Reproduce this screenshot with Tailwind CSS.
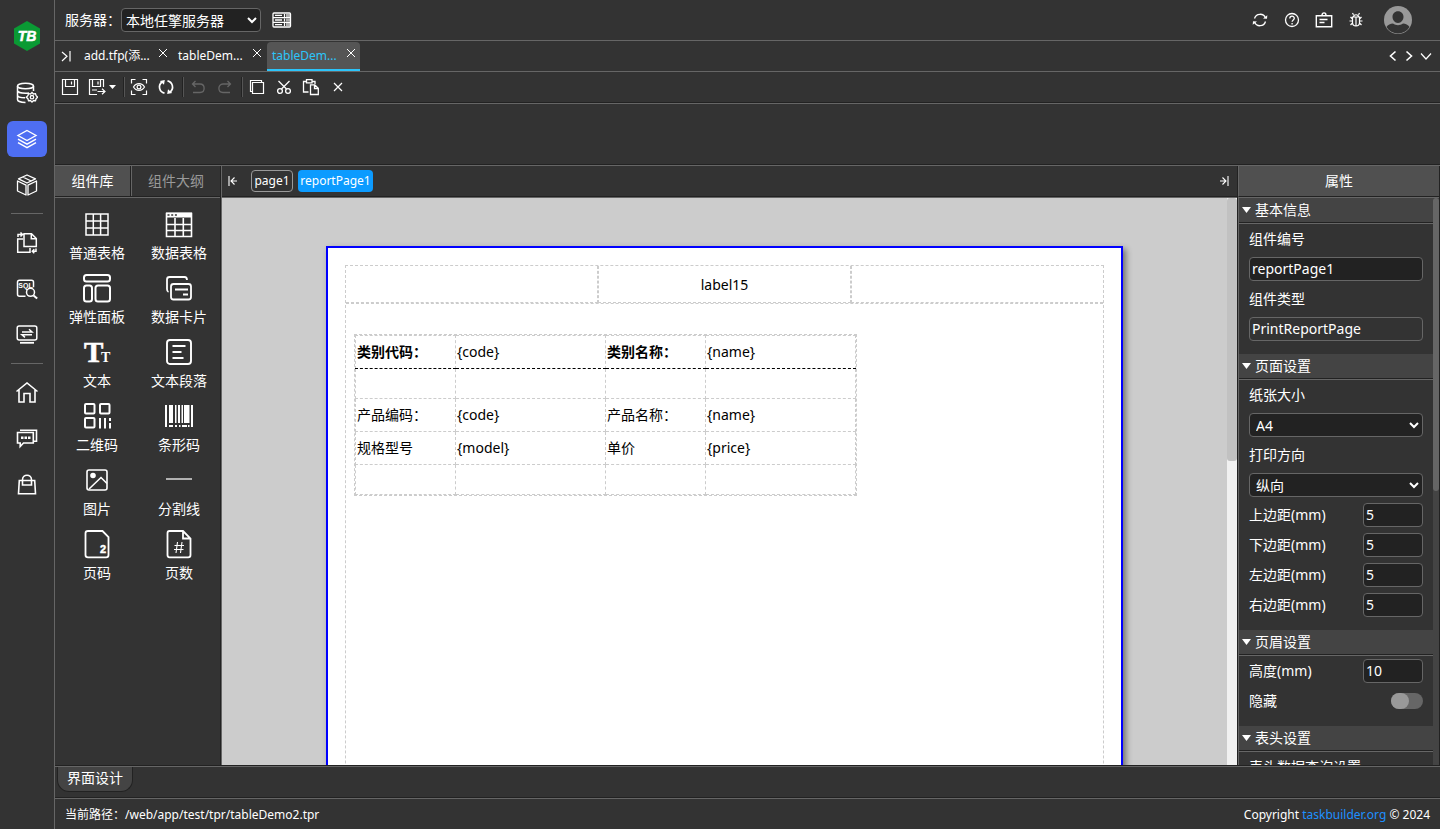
<!DOCTYPE html>
<html lang="zh-CN">
<head>
<meta charset="utf-8">
<title>TaskBuilder</title>
<script src="https://cdn.jsdelivr.net/npm/@tailwindcss/browser@4"></script>
</head>
<body class="flex h-dvh overflow-hidden bg-[#333] font-['Noto_Sans','Noto_Sans_CJK_SC',sans-serif] text-sm leading-5 text-white">

<!-- Main navigation -->
<nav class="flex w-[55px] shrink-0 flex-col items-center gap-[10px] border-r border-[#666] pt-5" aria-label="主导航">
  <a href="#" class="mb-[13px]" aria-label="TaskBuilder">
    <svg class="h-8 w-[28px]" viewBox="0 0 28 32"><path d="M14 1 27 8.500V23.500L14 31 1 23.500V8.500Z" fill="#0a9a34"/><text x="14" y="21" text-anchor="middle" font-family="Liberation Sans" font-size="14" font-weight="bold" font-style="italic" fill="#fff" stroke="#fff" stroke-width=".5">TB</text></svg>
  </a>
  <button class="flex h-9 w-10 items-center justify-center rounded-md" aria-label="数据源">
    <svg class="size-[22px]" viewBox="0 0 22 22" fill="none" stroke="#fff" stroke-width="1.500"><ellipse cx="9.500" cy="4" rx="8" ry="2.800"/><path d="M1.500 4v13.500c0 1.500 3 3 8 3M17.500 4v5M1.500 8.500c0 1.500 3.500 2.800 8 2.800 1.500 0 2.500-.1 3.500-.3M1.500 13c0 1.500 3 2.800 7.500 2.800"/><path d="m16 10.500 1.500 1.500 2-.3.600 2 1.600 1.500-1.600 1.500-.6 2-2-.2-1.500 1.600-1.500-1.600-2 .2-.6-2-1.600-1.500 1.600-1.500.6-2 2 .3z" stroke-width="1.300"/><circle cx="16" cy="15.200" r="1.700" stroke-width="1.300"/></svg>
  </button>
  <button class="flex h-9 w-10 items-center justify-center rounded-md bg-[#4e6ef2]" aria-label="应用">
    <svg class="size-[22px]" viewBox="0 0 22 22" fill="none" stroke="#fff" stroke-width="1.400"><path d="m11 2.500 9 5-9 5-9-5zM2 11.200l9 5 9-5M2 14.600l9 5 9-5"/></svg>
  </button>
  <button class="flex h-9 w-10 items-center justify-center rounded-md" aria-label="组件">
    <svg class="size-[22px]" viewBox="0 0 22 22" fill="none" stroke="#fff" stroke-width="1.300" stroke-linejoin="round"><path d="M11 1 19.500 4.800 11 9 2.500 4.800zM1.500 7l8.500 4.200v9.800L1.500 17zM20.500 7 12 11.200v9.800l8.500-4zM6.700 3l8.500 4"/></svg>
  </button>
  <hr class="w-8 border-[#666]">
  <button class="mt-px flex h-9 w-10 items-center justify-center rounded-md" aria-label="迁移">
    <svg class="size-[22px]" viewBox="0 0 22 22" fill="none" stroke="#fff" stroke-width="1.500"><path d="M8 14.500V1.700h7.500L20.300 6.500v8zM15.300 2v4.700H20M7 7H1.700v13.300H14V16M2 5V2.500h3.500M4.500.5l2 2-2 2M20 16.500v2.700h-3M18.300 17.200l-2 2 2 2"/></svg>
  </button>
  <button class="flex h-9 w-10 items-center justify-center rounded-md" aria-label="SQL查询">
    <svg class="size-[22px]" viewBox="0 0 22 22" fill="none" stroke="#fff" stroke-width="1.500"><path d="M9.500 18.300H3.500c-1.200 0-2-.8-2-2V4.200c0-1.200.8-2 2-2h12c1.200 0 2 .8 2 2v5"/><circle cx="14.500" cy="14.300" r="4"/><path d="m17.500 17.500 3.700 3" stroke-width="2"/><text x="9.500" y="9.500" text-anchor="middle" font-family="Liberation Sans" font-size="7" font-weight="bold" fill="#fff" stroke="none">SQL</text></svg>
  </button>
  <button class="flex h-9 w-10 items-center justify-center rounded-md" aria-label="终端">
    <svg class="size-[22px]" viewBox="0 0 22 22" fill="none" stroke="#fff" stroke-width="1.500"><rect x="1.200" y="2" width="19.600" height="14" rx="2"/><path d="M4 18.800h14" stroke-width="1.800"/><path d="M6 8h10L13 5.300M16 10.800H6l3 2.500"/></svg>
  </button>
  <hr class="w-8 border-[#666]">
  <button class="mt-px flex h-9 w-10 items-center justify-center rounded-md" aria-label="首页">
    <svg class="size-[22px]" viewBox="0 0 22 22" fill="none" stroke="#fff" stroke-width="1.600"><path d="M.5 9.500 11 1l10.500 8.500M3 8v12h5v-8.500h6V20h5V8"/></svg>
  </button>
  <button class="flex h-9 w-10 items-center justify-center rounded-md" aria-label="消息">
    <svg class="size-[22px]" viewBox="0 0 22 22" fill="none" stroke="#fff" stroke-width="1.600"><path d="M1.500 4.500h15.800V15H7.500l-3.300 3.500V15H1.500zM4 2.200h16.500v11H18"/><path d="M5 9.700h9.500" stroke-width="2.500" stroke-dasharray="2.500 1"/></svg>
  </button>
  <button class="flex h-9 w-10 items-center justify-center rounded-md" aria-label="商店">
    <svg class="size-[22px]" viewBox="0 0 22 22" fill="none" stroke="#fff" stroke-width="1.600"><path d="M3.300 6.500h15.400l.8 13.300H2.500zM6.500 11V5.700c0-6 9-6 9 0V11z"/></svg>
  </button>
</nav>

<div class="flex min-w-0 flex-1 flex-col">

  <!-- Server bar -->
  <header class="flex h-[41px] shrink-0 items-center border-b border-[#666] pl-[10px] pr-7">
    <label for="server">服务器：</label>
    <select id="server" class="h-6 w-[140px] rounded border border-[#666] bg-[#222]"><option>本地任擎服务器</option></select>
    <button class="ml-[11px]" aria-label="服务器列表"><svg class="size-5" viewBox="0 0 20 20" fill="none" stroke="#fff" stroke-width="1.300"><rect x="1" y="3" width="17.500" height="14" rx="1"/><path d="M1 7.700h17.500M1 12.300h17.500M3 5.400h7M3 10h7M3 14.700h7"/><path d="M12.500 4v12M15 4v12M17 4v12" stroke-width="1.200" stroke-dasharray="3 1.500"/></svg></button>
    <div class="ml-auto flex items-center gap-4">
      <button aria-label="刷新"><svg class="size-4" viewBox="0 0 16 16" fill="none" stroke="#fff" stroke-width="1.300"><path d="M2.500 6.500a5.800 5.800 0 0 1 11-.5M13.500 9.500a5.800 5.800 0 0 1-11 .5"/><path d="m11 6.500 4 .3.300-3.500zM5 9.500l-4-.3-.3 3.500z" fill="#fff" stroke="none"/></svg></button>
      <button aria-label="帮助"><svg class="size-4" viewBox="0 0 16 16" fill="none" stroke="#fff" stroke-width="1.300"><circle cx="8" cy="8" r="6.500"/><path d="M5.800 6.500c0-3 4.500-3 4.500-.3 0 1.700-2.200 1.700-2.200 3.600M8.100 11v1.400"/></svg></button>
      <button aria-label="公告"><svg class="-mx-px size-[18px]" viewBox="0 0 18 18" fill="none" stroke="#fff" stroke-width="1.400"><path d="M1.300 4.700h15.400v11H1.300zM7 4.500C7 1 11 1 11 4.500M4.500 8.500h8M4.500 11.500h5"/></svg></button>
      <button aria-label="调试"><svg class="size-4" viewBox="0 0 16 16" fill="none" stroke="#fff" stroke-width="1.200"><path d="M4.500 5h7v5.500a3.500 3.500 0 0 1-7 0zM5.500 5c0-3 5-3 5 0M5.500 2.700 4.500 1M10.500 2.700l1-1.700M8 5v9M4.500 7 2.500 5M11.500 7l2-2M1.500 9h3M11.500 9h3M4.500 11l-2 2M11.500 11l2 2"/></svg></button>
      <button class="ml-1" aria-label="用户"><svg class="size-7" viewBox="0 0 28 28"><circle cx="14" cy="14" r="14" fill="#999"/><path d="M2.500 21c1.300-2.200 4-3.300 6.500-3.500 3 2.300 7 2.300 10 0 2.500.2 5.200 1.300 6.500 3.500a13.300 13.300 0 0 1-23 0zM14 5.300c3.300 0 5.500 2.500 5.500 5.500S17.300 17 14 17s-5.500-3.200-5.500-6.200S10.700 5.300 14 5.300z" fill="#333"/></svg></button>
    </div>
  </header>

  <!-- Open files -->
  <div class="flex h-[31px] shrink-0 items-center border-b border-[#666] pr-[7px] text-xs">
    <button class="mr-1 w-5 pl-[5px]" aria-label="收起"><svg class="size-3" viewBox="0 0 12 12" fill="none" stroke="#fff" stroke-width="1.200"><path d="m2 2 5 4.300L2 11M10 1v10.500"/></svg></button>
    <div class="flex h-full items-end gap-px">
      <div class="flex h-[29px] w-[93px] items-start justify-between pl-[5px] pr-1"><button class="whitespace-nowrap pt-1.5">add.tfp(添...</button><button class="pt-1.5" aria-label="关闭"><svg class="size-[10px]" viewBox="0 0 10 10" stroke="#fff"><path d="m1 1 8 8M9 1 1 9"/></svg></button></div>
      <div class="flex h-[29px] w-[93px] items-start justify-between pl-[5px] pr-1"><button class="whitespace-nowrap pt-1.5">tableDem...</button><button class="pt-1.5" aria-label="关闭"><svg class="size-[10px]" viewBox="0 0 10 10" stroke="#fff"><path d="m1 1 8 8M9 1 1 9"/></svg></button></div>
      <div class="flex h-[29px] w-[93px] items-start justify-between rounded-t-sm border-b-2 border-[#2cc5fb] bg-[#555] pl-[5px] pr-1"><button class="whitespace-nowrap pt-1.5 text-[#2cc5fb]">tableDem...</button><button class="pt-1.5" aria-label="关闭"><svg class="size-[10px]" viewBox="0 0 10 10" stroke="#fff"><path d="m1 1 8 8M9 1 1 9"/></svg></button></div>
    </div>
    <div class="ml-auto flex items-center gap-1">
      <button aria-label="向左"><svg class="size-3" viewBox="0 0 12 12" fill="none" stroke="#fff" stroke-width="1.600"><path d="M8.500 1.500 3.500 6l5 4.500"/></svg></button>
      <button aria-label="向右"><svg class="size-3" viewBox="0 0 12 12" fill="none" stroke="#fff" stroke-width="1.600"><path d="m3.500 1.500 5 4.500-5 4.500"/></svg></button>
      <button aria-label="全部文件"><svg class="size-3.5" viewBox="0 0 14 14" fill="none" stroke="#fff" stroke-width="1.200"><path d="m2 4.500 5 5.500 5-5.500"/></svg></button>
    </div>
  </div>

  <!-- Toolbar -->
  <div class="flex h-[31px] shrink-0 items-center border-b border-[#222] pl-px" role="toolbar">
    <button class="flex w-[27px] justify-center" aria-label="保存"><svg class="size-[18px]" viewBox="0 0 18 18" fill="none" stroke="#fff" stroke-width="1.200"><path d="M1.500 1.500h15v15h-15zM4.500 1.500v7h9v-7M10.500 3.500v3"/></svg></button>
    <button class="flex w-[37px] items-center gap-[3px] pl-[5px]" aria-label="另存为"><svg class="size-[18px]" viewBox="0 0 18 18" fill="none" stroke="#fff" stroke-width="1.200"><path d="M9 16.500H1.500v-15h14V9M4.500 1.500v7h8v-7M10 3.500v3M4 12h5M9.500 13.500H17M14 10.700l3 2.800-3 2.800"/></svg><svg class="h-1 w-[7px]" viewBox="0 0 7 4"><path d="M0 0h7L3.500 4z" fill="#fff"/></svg></button>
    <span class="ml-[3px] h-5 w-[2px] border-l border-[#222] bg-[#555]"></span>
    <button class="flex w-[27px] justify-center" aria-label="预览"><svg class="size-[18px]" viewBox="0 0 18 18" fill="none" stroke="#fff" stroke-width="1.200"><path d="M1.500 5.500v-4h4M12.500 1.500h4v4M16.500 12.500v4h-4M5.500 16.500h-4v-4M3.500 9c2.500-4.500 8.500-4.500 11 0-2.500 4.500-8.500 4.500-11 0z"/><circle cx="9" cy="9" r="1.900"/></svg></button>
    <button class="flex w-[27px] justify-center" aria-label="刷新"><svg class="size-[18px]" viewBox="0 0 18 18" fill="none" stroke="#fff" stroke-width="1.700"><path d="M7.500 15.200A6.300 6.300 0 0 1 5 4M10.500 2.800A6.300 6.300 0 0 1 13 14"/><path d="m2.800 3 5-1-.8 4.800zM15.200 15l-5 1 .8-4.800z" fill="#fff" stroke="none"/></svg></button>
    <span class="ml-[3px] h-5 w-[2px] border-l border-[#222] bg-[#555]"></span>
    <button class="flex w-[27px] justify-center" aria-label="撤销"><svg class="size-4" viewBox="0 0 16 16" fill="none" stroke="#666" stroke-width="1.300"><path d="M5.500 2 2.500 5l3 3M2.500 5h7.500c5.500 0 5.500 8.500 0 8.500H3"/></svg></button>
    <button class="flex w-[27px] justify-center" aria-label="重做"><svg class="size-4" viewBox="0 0 16 16" fill="none" stroke="#666" stroke-width="1.300"><path d="m10.500 2 3 3-3 3M13.500 5H6c-5.500 0-5.500 8.500 0 8.500h7"/></svg></button>
    <span class="ml-[3px] h-5 w-[2px] border-l border-[#222] bg-[#555]"></span>
    <button class="flex w-[27px] justify-center" aria-label="复制"><svg class="size-4" viewBox="0 0 16 16" fill="none" stroke="#fff" stroke-width="1.200"><path d="M3.500 3.500h11v11h-11z"/><path d="M3.500 12.500h-2v-11h11v2"/></svg></button>
    <button class="flex w-[27px] justify-center" aria-label="剪切"><svg class="size-4" viewBox="0 0 16 16" fill="none" stroke="#fff" stroke-width="1.300"><circle cx="4" cy="12" r="2.400"/><circle cx="12" cy="12" r="2.400"/><path d="M2.500 2 10.500 10M13.500 2l-8 8"/></svg></button>
    <button class="flex w-[27px] justify-center" aria-label="粘贴"><svg class="size-[18px]" viewBox="0 0 18 18" fill="none" stroke="#fff" stroke-width="1.300"><path d="M6.500 14h-5V3.500h3M10 3.500h3V6M4.500 1.700h5.500v3.200H4.500z"/><path d="M8.500 6.800h4.300l3.500 3.400v6.300H8.500zM12.500 7v3.500h3.500"/></svg></button>
    <button class="flex w-[27px] justify-center" aria-label="删除"><svg class="size-[10px]" viewBox="0 0 10 10" stroke="#fff" stroke-width="1.200"><path d="m1 1 8 8M9 1 1 9"/></svg></button>
  </div>
  <div class="h-[62px] shrink-0 border-b border-t border-b-[#222] border-t-[#666]"></div>

  <!-- Designer -->
  <div class="flex min-h-0 flex-1 border-b border-t border-b-[#222] border-t-[#666]">

    <aside class="flex w-[166px] shrink-0 flex-col border-r border-[#222]">
      <div class="flex h-[31px] shrink-0 border-b border-[#222]">
        <button class="w-[76px] border-r border-[#222] bg-[#505050]">组件库</button>
        <button class="flex-1 border-l border-[#666] text-[#999]">组件大纲</button>
      </div>
      <div class="grid flex-1 auto-rows-[64px] grid-cols-2 content-start border-t border-[#666] pl-px pt-[9px]">
        <button class="flex flex-col items-center"><svg class="h-9 w-8" viewBox="0 0 32 36" fill="none" stroke="#fff" stroke-width="1.500"><path d="M5 7h22v21H5zM5 14h22M5 21h22M12.300 7v21M19.600 7v21"/></svg>普通表格</button>
        <button class="flex flex-col items-center"><svg class="h-9 w-8" viewBox="0 0 32 36" fill="none" stroke="#fff" stroke-width="1.600"><path d="M3.500 6.500h25v23h-25zM3.500 17.500h25M3.500 23.500h25M12 11v18M20.300 11v18"/><path d="M3 5.500h26v5H3z" fill="#fff" stroke="none"/><path d="M4.500 8h10" stroke="#333" stroke-dasharray="2 1.700"/></svg>数据表格</button>
        <button class="flex flex-col items-center"><svg class="h-9 w-8" viewBox="0 0 32 36" fill="none" stroke="#fff" stroke-width="2"><rect x="3" y="4" width="26" height="6.500" rx="2.500"/><rect x="3" y="14.500" width="8" height="16" rx="2.500"/><rect x="14.500" y="14.500" width="14.500" height="16" rx="2.500"/></svg>弹性面板</button>
        <button class="flex flex-col items-center"><svg class="h-9 w-8" viewBox="0 0 32 36" fill="none" stroke="#fff" stroke-width="1.800"><path d="M5.500 21c-1.300-.5-1.500-1.500-1.500-3V8.500C4 7 4.800 6 6.500 6h15c1.500 0 2.500 1 2.500 3"/><rect x="8" y="13" width="20" height="15.500" rx="2.500"/><path d="M12 18.500h13M20 23.500h5"/></svg>数据卡片</button>
        <button class="flex flex-col items-center"><svg class="h-9 w-8" viewBox="0 0 32 36" fill="#fff"><text x="3" y="27" font-family="Liberation Serif" font-size="29" font-weight="bold" stroke="#fff" stroke-width=".6">T</text><text x="20" y="27" font-family="Liberation Serif" font-size="14" font-weight="bold">T</text></svg>文本</button>
        <button class="flex flex-col items-center"><svg class="h-9 w-8" viewBox="0 0 32 36" fill="none" stroke="#fff" stroke-width="1.900"><rect x="4" y="5" width="24" height="24" rx="3"/><path d="M9.500 11h13M9.500 17h9M9.500 23h11"/></svg>文本段落</button>
        <button class="flex flex-col items-center"><svg class="h-9 w-8" viewBox="0 0 32 36" fill="none" stroke="#fff" stroke-width="2"><rect x="4" y="5" width="9.500" height="9.500" rx="1"/><rect x="19" y="5" width="9.500" height="9.500" rx="1"/><rect x="4" y="19" width="9.500" height="9.500" rx="1"/><path d="M19 19v10.500M24 19v10.500M29 19v3M29 24v5.500"/></svg>二维码</button>
        <button class="flex flex-col items-center"><svg class="h-9 w-8" viewBox="0 0 32 36" fill="#fff"><path d="M2 6h2v22H2zM6 6h4v18H6zM12 6h1.500v18H12zM15 6h2v18h-2zM18.500 6h1.500v18h-1.500zM21 6h5.500v18H21zM28 6h2v22h-2zM6 26h4v2H6zM12 26h2v2h-2zM16 26h1.500v2H16zM19 26h5v2h-5zM25 26h1.500v2H25z"/></svg>条形码</button>
        <button class="flex flex-col items-center"><svg class="h-9 w-8" viewBox="0 0 32 36" fill="none" stroke="#fff" stroke-width="1.600"><rect x="6" y="7" width="20" height="20" rx="2"/><circle cx="12" cy="12.500" r="2" fill="#fff"/><path d="m8 26 12-11.500 6 6"/></svg>图片</button>
        <button class="flex flex-col items-center"><svg class="h-9 w-8" viewBox="0 0 32 36" stroke="#ddd" stroke-width="1.500"><path d="M3 16h26"/></svg>分割线</button>
        <button class="flex flex-col items-center"><svg class="h-9 w-8" viewBox="0 0 32 36" fill="none" stroke="#fff" stroke-width="1.800"><path d="M7 4h14.500l6 6V28c0 1.500-.8 2.300-2.300 2.300H7c-1.500 0-2.500-.8-2.500-2.300V6.300C4.500 4.800 5.500 4 7 4z"/><text x="19" y="26" font-family="Liberation Sans" font-size="11" font-weight="bold" fill="#fff" stroke="#fff" stroke-width=".5">2</text></svg>页码</button>
        <button class="flex flex-col items-center"><svg class="h-9 w-8" viewBox="0 0 32 36" fill="none" stroke="#fff" stroke-width="1.800"><path d="M6.500 4H20l7.500 7.500V28c0 1.500-.8 2.300-2.300 2.300H6.500C5 30.300 4.500 29.500 4.500 28V6.300C4.500 4.800 5 4 6.500 4zM20 4v7.500h7.500"/><path d="M14.500 15l-1.500 11M19 15l-1.500 11M11.500 18.500h9.500M11 22.500h9.500" stroke-width="1.100"/></svg>页数</button>
      </div>
    </aside>

    <main class="flex min-w-0 flex-1 flex-col border-l border-[#666]">
      <div class="flex h-[31px] shrink-0 items-center border-b border-[#222] pl-[5px] pr-[7px] text-xs">
        <button aria-label="收起左侧"><svg class="size-3" viewBox="0 0 12 12" fill="none" stroke="#fff" stroke-width="1.100"><path d="M2 1v10M10 6H4M7.500 2.500 4 6l3.500 3.500"/></svg></button>
        <button class="ml-3 h-[22px] w-[42px] rounded border border-[#999]">page1</button>
        <button class="ml-[5px] h-[22px] w-[75px] rounded bg-[#0c9bff]">reportPage1</button>
        <button class="ml-auto" aria-label="收起右侧"><svg class="size-3" viewBox="0 0 12 12" fill="none" stroke="#fff" stroke-width="1.100"><path d="M10 1v10M2 6h6M4.500 2.500 8 6l-3.500 3.500"/></svg></button>
      </div>
      <div class="flex min-h-0 flex-1 border-t border-[#666] bg-[#ccc] text-black">
        <div class="min-w-0 flex-1 overflow-hidden pt-12">
          <section class="mx-auto h-[1127px] w-[797px] border-2 border-[#00f] bg-white p-[17px] shadow-[3px_3px_6px_rgba(0,0,0,0.45)]">
            <div class="h-full border border-dashed border-[#ccc]">
              <div class="grid h-[38px] grid-cols-3 border-b border-dashed border-[#ccc]">
                <div class="border-b border-r border-dashed border-[#ccc]"></div>
                <div class="flex items-center justify-center border-x border-b border-dashed border-[#ccc] pt-px">label15</div>
                <div class="border-b border-l border-dashed border-[#ccc]"></div>
              </div>
              <div class="ml-2 mt-[30px] w-[503px] border border-dashed border-[#ccc]">
                <table class="w-full table-fixed border-collapse [&_td]:border [&_td]:border-dashed [&_td]:border-[#ccc] [&_td]:px-px [&_td]:py-0 [&_th]:border [&_th]:border-dashed [&_th]:border-[#ccc] [&_th]:border-b-black [&_th]:px-px [&_th]:py-0 [&_th]:text-left">
                  <colgroup><col class="w-[100px]"><col class="w-[150px]"><col class="w-[100px]"><col class="w-[150px]"></colgroup>
                  <thead><tr class="h-[33px]"><th>类别代码：</th><th class="font-normal">{code}</th><th>类别名称：</th><th class="font-normal">{name}</th></tr></thead>
                  <tbody>
                    <tr class="h-[30px]"><td></td><td></td><td></td><td></td></tr>
                    <tr class="h-[33px]"><td>产品编码：</td><td>{code}</td><td>产品名称：</td><td>{name}</td></tr>
                    <tr class="h-[33px]"><td>规格型号</td><td>{model}</td><td>单价</td><td>{price}</td></tr>
                    <tr class="h-[30px]"><td></td><td></td><td></td><td></td></tr>
                  </tbody>
                </table>
              </div>
            </div>
          </section>
        </div>
        <div class="w-[10px] shrink-0 bg-[#f1f1f1]"><div class="h-[263px] rounded-[3px] bg-[#c1c1c1]"></div></div>
      </div>
    </main>

    <!-- Properties -->
    <aside class="flex w-[203px] shrink-0 flex-col border-l border-r border-[#222]">
      <h2 class="flex h-[31px] shrink-0 items-center justify-center border-b border-l border-b-[#222] border-l-[#666] bg-[#505050]">属性</h2>
      <div class="flex min-h-0 flex-1 border-l border-t border-[#666]">
        <form class="flex-1 overflow-hidden">
          <h3 class="flex h-[25px] items-center gap-1 border-b border-[#222] bg-[#444] pl-[3px]"><svg class="h-[6px] w-[9px]" viewBox="0 0 9 6"><path d="M0 0h9L4.500 6z" fill="#fff"/></svg>基本信息</h3>
          <div class="border-t border-[#666] pb-[10px] pl-[10px] pr-[10px]">
            <label for="cid" class="block h-[30px] leading-[30px]">组件编号</label>
            <div class="flex h-[30px] items-center"><input id="cid" class="h-6 w-full rounded border border-[#666] bg-[#222] px-[2px] pb-[2px]" value="reportPage1"></div>
            <label for="ctype" class="block h-[30px] leading-[30px]">组件类型</label>
            <div class="flex h-[30px] items-center"><input id="ctype" class="h-6 w-full rounded border border-[#666] bg-[#333] px-[2px] pb-[2px]" value="PrintReportPage" readonly></div>
          </div>
          <h3 class="flex h-[25px] items-center gap-1 border-b border-[#222] bg-[#444] pl-[3px]"><svg class="h-[6px] w-[9px]" viewBox="0 0 9 6"><path d="M0 0h9L4.500 6z" fill="#fff"/></svg>页面设置</h3>
          <div class="border-t border-[#666] pb-[10px] pl-[10px] pr-[10px]">
            <label for="paper" class="block h-[30px] leading-[30px]">纸张大小</label>
            <div class="flex h-[30px] items-center"><select id="paper" class="h-6 w-full rounded border border-[#666] bg-[#222] pl-[2px]"><option>A4</option></select></div>
            <label for="dir" class="block h-[30px] leading-[30px]">打印方向</label>
            <div class="flex h-[30px] items-center"><select id="dir" class="h-6 w-full rounded border border-[#666] bg-[#222] pl-[2px]"><option>纵向</option></select></div>
            <div class="flex h-[30px] items-center justify-between"><label for="mt">上边距(mm)</label><input id="mt" class="h-6 w-[60px] rounded border border-[#666] bg-[#222] px-[2px] pb-[2px]" value="5"></div>
            <div class="flex h-[30px] items-center justify-between"><label for="mb">下边距(mm)</label><input id="mb" class="h-6 w-[60px] rounded border border-[#666] bg-[#222] px-[2px] pb-[2px]" value="5"></div>
            <div class="flex h-[30px] items-center justify-between"><label for="ml">左边距(mm)</label><input id="ml" class="h-6 w-[60px] rounded border border-[#666] bg-[#222] px-[2px] pb-[2px]" value="5"></div>
            <div class="flex h-[30px] items-center justify-between"><label for="mr">右边距(mm)</label><input id="mr" class="h-6 w-[60px] rounded border border-[#666] bg-[#222] px-[2px] pb-[2px]" value="5"></div>
          </div>
          <h3 class="flex h-[25px] items-center gap-1 border-b border-[#222] bg-[#444] pl-[3px]"><svg class="h-[6px] w-[9px]" viewBox="0 0 9 6"><path d="M0 0h9L4.500 6z" fill="#fff"/></svg>页眉设置</h3>
          <div class="border-t border-[#666] pb-[10px] pl-[10px] pr-[10px]">
            <div class="flex h-[30px] items-center justify-between"><label for="hh">高度(mm)</label><input id="hh" class="h-6 w-[60px] rounded border border-[#666] bg-[#222] px-[2px] pb-[2px]" value="10"></div>
            <div class="flex h-[30px] items-center justify-between"><label for="hide">隐藏</label><input id="hide" type="checkbox" role="switch" class="h-4 w-8 appearance-none rounded-full bg-[#666] before:block before:h-4 before:w-[18px] before:rounded-full before:bg-[#999] checked:before:ml-auto"></div>
          </div>
          <h3 class="flex h-[25px] items-center gap-1 border-b border-[#222] bg-[#444] pl-[3px]"><svg class="h-[6px] w-[9px]" viewBox="0 0 9 6"><path d="M0 0h9L4.500 6z" fill="#fff"/></svg>表头设置</h3>
          <div class="border-t border-[#666] pl-[10px]"><span class="block h-[30px] leading-[30px]">表头数据查询设置</span></div>
        </form>
        <div class="w-[6px] shrink-0 bg-[#444]"><div class="h-[293px] rounded-[3px] bg-[#666]"></div></div>
      </div>
    </aside>
  </div>

  <!-- View tabs -->
  <div class="h-8 shrink-0 border-b border-t border-b-[#222] border-t-[#666] pl-[2px]">
    <button class="h-[25px] w-[76px] rounded-b-xl border border-t-0 border-[#222] bg-[#444] pb-[3px]">界面设计</button>
  </div>
  <footer class="flex h-[31px] shrink-0 items-center justify-between border-t border-[#666] px-[10px] pt-px text-xs">
    <span>当前路径：/web/app/test/tpr/tableDemo2.tpr</span>
    <span>Copyright <a href="#" class="text-[#1e90ff]">taskbuilder.org</a> © 2024</span>
  </footer>
</div>
</body>
</html>
